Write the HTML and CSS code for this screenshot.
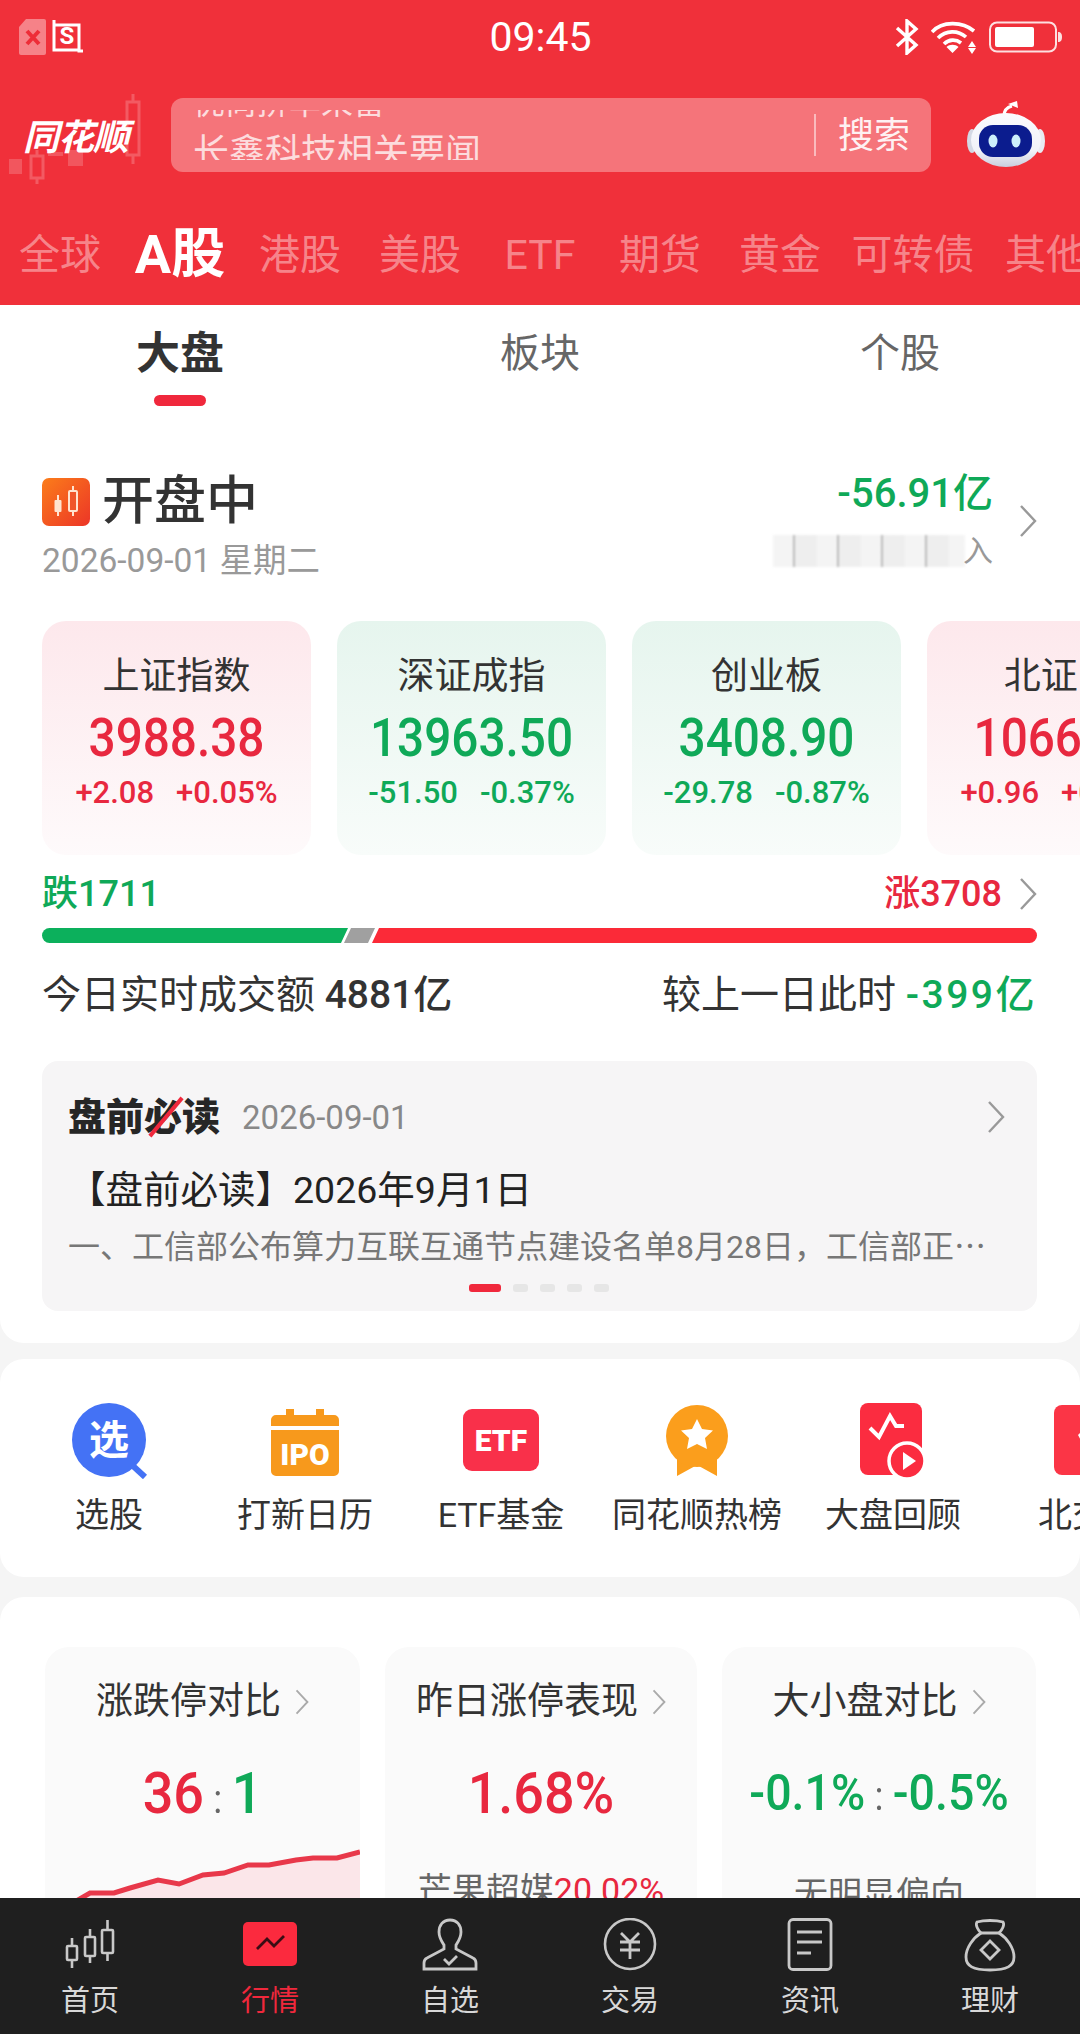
FILE: index.html
```html
<!DOCTYPE html>
<html lang="en">
<head>
  <meta charset="UTF-8" />
  <meta name="viewport" content="width=device-width, initial-scale=1.0"/>
  <title>行情 | 同花顺</title>
  <link rel="stylesheet" href="styles.css">
</head>
<body>
  <svg class="sprite" width="0" height="0">
    <symbol id="chev" viewBox="0 0 18 32"><path d="M2 1l14 15L2 31" fill="none" stroke="currentColor" stroke-width="2.4"/></symbol>
  </svg>

  <div class="page">
    <header class="top">
      <svg class="candles" width="150" height="100" viewBox="0 0 150 100">
        <g fill="#fff" opacity=".18">
          <rect x="2" y="67" width="13" height="15"/>
          <rect x="61" y="58" width="15" height="16"/>
          <rect x="41" y="60" width="15" height="4"/>
        </g>
        <g fill="none" stroke="#fff" stroke-width="3" opacity=".2">
          <path d="M24 64v22h12V64zM30 58v6M30 86v6"/>
          <path d="M120 10v53h12V10zM126 2v8M126 63v9"/>
        </g>
      </svg>

      <div class="status">
        <div class="status-left">
          <svg width="30" height="38" viewBox="0 0 30 38">
            <path d="M8 1h18a2 2 0 0 1 2 2v32a2 2 0 0 1-2 2H3a2 2 0 0 1-2-2V9z" fill="#fff" fill-opacity=".4"/>
            <path d="M9 13l12 13M21 13L9 26" stroke="#ee2d38" stroke-width="4"/>
          </svg>
          <svg width="32" height="36" viewBox="0 0 32 36">
            <path d="M2 1v5h25v26h4M2 1v30h25" fill="none" stroke="#fff" stroke-width="3"/>
            <text x="15" y="25" class="s-glyph">S</text>
          </svg>
        </div>
        <div class="clock">09:45</div>
        <div class="status-right">
          <svg width="24" height="36" viewBox="0 0 24 36">
            <path d="M2 9l19 17-9 8V2l9 8L2 27" fill="none" stroke="#fff" stroke-width="3.4"/>
          </svg>
          <svg width="46" height="34" viewBox="0 0 46 34">
            <g fill="none" stroke="#fff" stroke-width="3.6">
              <path d="M1 12C11 1 31 1 43 11"/>
              <path d="M7 18c8-8 20-8 28-1"/>
              <path d="M13 24c5-5 12-5 17-1"/>
            </g>
            <path d="M21.500 33l-6-6c3-3 9-3 12 0zM41 21l4 6h-8zM37 28h8l-4 6z" fill="#fff"/>
          </svg>
          <svg width="74" height="32" viewBox="0 0 74 32">
            <rect x="1" y="1.500" width="66" height="29" rx="7" fill="none" stroke="#fff" stroke-opacity=".85" stroke-width="2"/>
            <rect x="6" y="6" width="39" height="20" rx="2" fill="#fff"/>
            <path d="M69 11c3 0 4 2 4 5s-1 5-4 5z" fill="#fff" fill-opacity=".85"/>
          </svg>
        </div>
      </div>

      <div class="searchrow">
        <div class="logo">同花顺</div>
        <div class="search">
          <div class="ticker">
            <div class="ticker-prev">优尚拼率采留</div>
            <div class="ticker-now">长鑫科技相关要闻</div>
          </div>
          <div class="search-btn">搜索</div>
        </div>
        <svg class="robot" width="80" height="70" viewBox="0 0 80 70">
          <defs>
            <linearGradient id="head" x1="0" y1="0" x2="0" y2="1">
              <stop offset="0" stop-color="#fbfbfe"/>
              <stop offset=".7" stop-color="#f1f2f8"/>
              <stop offset="1" stop-color="#c9cede"/>
            </linearGradient>
          </defs>
          <path d="M38 16c0-6 4-9 8-10" fill="none" stroke="#fff" stroke-width="3"/>
          <path d="M42 4l9-3 1 7z" fill="#fff"/>
          <ellipse cx="6" cy="41" rx="5" ry="12" fill="#d3d8e4"/>
          <ellipse cx="74" cy="41" rx="5" ry="12" fill="#e8ebf2"/>
          <ellipse cx="40" cy="40" rx="35" ry="27" fill="url(#head)"/>
          <rect x="13" y="25" width="53" height="32" rx="14" fill="#0b1c8e"/>
          <ellipse cx="27" cy="41" rx="4.500" ry="6.500" fill="#cdeffc"/>
          <ellipse cx="50" cy="41" rx="4.500" ry="6.500" fill="#cdeffc"/>
        </svg>
      </div>

      <nav class="markets">
        <span class="market">全球</span>
        <span class="market market-on">A股</span>
        <span class="market">港股</span>
        <span class="market">美股</span>
        <span class="market">ETF</span>
        <span class="market">期货</span>
        <span class="market">黄金</span>
        <span class="market market-wide">可转债</span>
        <span class="market">其他</span>
      </nav>
    </header>

    <section class="panel panel-main">
      <div class="subtabs">
        <div class="subtab subtab-on">大盘<i class="subtab-bar"></i></div>
        <div class="subtab">板块</div>
        <div class="subtab">个股</div>
      </div>

      <div class="session">
        <div>
          <div class="session-title">
            <svg width="48" height="48" viewBox="0 0 48 48">
              <defs>
                <linearGradient id="sess" x1="0" y1="0" x2="1" y2="1">
                  <stop offset="0" stop-color="#fb7d1a"/>
                  <stop offset="1" stop-color="#ec3527"/>
                </linearGradient>
              </defs>
              <rect width="48" height="48" rx="7" fill="url(#sess)"/>
              <path d="M16 17v21M31 8v30" stroke="#ffe3cf" stroke-width="2"/>
              <rect x="12.500" y="22" width="7" height="12" rx="1" fill="#ffe3cf"/>
              <rect x="27" y="13" width="8" height="20" rx="1" fill="#f0562a" stroke="#ffe3cf" stroke-width="2"/>
            </svg>
            <span>开盘中</span>
          </div>
          <div class="session-date">2026-09-01 星期二</div>
        </div>
        <div class="flow">
          <div>
            <div class="flow-num down">-56.91亿</div>
            <div class="flow-label"><i class="smear"></i>入</div>
          </div>
          <svg class="chev"><use href="#chev"/></svg>
        </div>
      </div>

      <div class="indices">
        <div class="index index-up">
          <div class="index-name">上证指数</div>
          <div class="index-num up">3988.38</div>
          <div class="index-sub up"><span>+2.08</span><span>+0.05%</span></div>
        </div>
        <div class="index index-down">
          <div class="index-name">深证成指</div>
          <div class="index-num down">13963.50</div>
          <div class="index-sub down"><span>-51.50</span><span>-0.37%</span></div>
        </div>
        <div class="index index-down">
          <div class="index-name">创业板</div>
          <div class="index-num down">3408.90</div>
          <div class="index-sub down"><span>-29.78</span><span>-0.87%</span></div>
        </div>
        <div class="index index-up">
          <div class="index-name">北证50</div>
          <div class="index-num up">1066.27</div>
          <div class="index-sub up"><span>+0.96</span><span>+0.09%</span></div>
        </div>
      </div>

      <div class="breadth">
        <span class="down">跌1711</span>
        <span class="breadth-right"><span class="up">涨3708</span><svg class="chev"><use href="#chev"/></svg></span>
      </div>
      <div class="bar">
        <i class="bar-down"></i>
        <i class="bar-flat"></i>
        <i class="bar-up"></i>
      </div>

      <div class="turnover">
        <span>今日实时成交额 <b>4881亿</b></span>
        <span>较上一日此时 <b class="down turnover-delta">-399亿</b></span>
      </div>

      <div class="brief">
        <div class="brief-head">
          <span class="brief-logo">盘前<span class="slash">必</span>读</span>
          <span class="brief-date">2026-09-01</span>
          <svg class="chev brief-chev"><use href="#chev"/></svg>
        </div>
        <div class="brief-title">【盘前必读】2026年9月1日</div>
        <div class="brief-body">一、工信部公布算力互联互通节点建设名单8月28日，工信部正<span class="brief-more" lang="zh-CN">…</span></div>
        <div class="dots">
          <i class="dot dot-on"></i><i class="dot"></i><i class="dot"></i><i class="dot"></i><i class="dot"></i>
        </div>
      </div>
    </section>

    <section class="panel panel-short">
      <div class="shortcuts">
        <div class="shortcut">
          <svg width="80" height="76" viewBox="0 0 80 76">
            <circle cx="40" cy="37" r="37" fill="#4472f5"/>
            <path d="M63 62l13 12" stroke="#4472f5" stroke-width="6"/>
            <text x="40" y="51" class="icon-cn">选</text>
          </svg>
          <span>选股</span>
        </div>
        <div class="shortcut">
          <svg width="70" height="70" viewBox="0 0 70 70">
            <path d="M16 3h8v6h-8zM46 3h8v6h-8z" fill="#f7991c"/>
            <path d="M1 14a5 5 0 0 1 5-5h58a5 5 0 0 1 5 5v6H1zM1 24h68v41a5 5 0 0 1-5 5H6a5 5 0 0 1-5-5z" fill="#f7991c"/>
            <text x="35" y="59" class="icon-en">IPO</text>
          </svg>
          <span>打新日历</span>
        </div>
        <div class="shortcut">
          <svg width="76" height="64" viewBox="0 0 76 64">
            <rect width="76" height="62" rx="9" fill="#f9304a"/>
            <text x="38" y="42" class="icon-en">ETF</text>
          </svg>
          <span>ETF基金</span>
        </div>
        <div class="shortcut">
          <svg width="64" height="72" viewBox="0 0 64 72">
            <path d="M12 50h40v21L32 60 12 71z" fill="#fb9e1c"/>
            <circle cx="32" cy="31" r="31" fill="#fb9e1c"/>
            <path d="M32 14l5 10 11 1.500-8 7.500 2 11-10-5-10 5 2-11-8-7.500 11-1.500z" fill="#fff"/>
          </svg>
          <span>同花顺热榜</span>
        </div>
        <div class="shortcut">
          <svg width="66" height="76" viewBox="0 0 66 76">
            <rect width="62" height="72" rx="8" fill="#fb2c40"/>
            <path d="M10 25l9 9 11-21 6 10h8" fill="none" stroke="#fff" stroke-width="4"/>
            <circle cx="47" cy="58" r="18" fill="#fb2c40" stroke="#fff" stroke-width="3.500"/>
            <path d="M43 49l13 9-13 9z" fill="#fff"/>
          </svg>
          <span>大盘回顾</span>
        </div>
        <div class="shortcut">
          <svg width="70" height="72" viewBox="0 0 70 72">
            <rect width="70" height="70" rx="8" fill="#fb3546"/>
            <path d="M24 30l11-11 11 11-11 21z" fill="#fff"/>
          </svg>
          <span>北交所</span>
        </div>
      </div>
    </section>

    <section class="panel panel-stats">
      <div class="stat">
        <div class="stat-title">涨跌停对比<svg class="chev chev-sm"><use href="#chev"/></svg></div>
        <div class="stat-num"><span class="up">36</span><i class="colon">:</i><span class="down">1</span></div>
        <svg class="spark" width="315" height="70" viewBox="0 0 315 70">
          <path d="M10 70L31 55 45 47 69 47 85 42 113 34 134 38 158 29 179 27 203 19 224 19 251 14 268 12 292 12 315 6V70z" fill="#fbe6e9"/>
          <path d="M10 70L31 55 45 47 69 47 85 42 113 34 134 38 158 29 179 27 203 19 224 19 251 14 268 12 292 12 315 6" fill="none" stroke="#e8384a" stroke-width="5"/>
        </svg>
      </div>
      <div class="stat">
        <div class="stat-title">昨日涨停表现<svg class="chev chev-sm"><use href="#chev"/></svg></div>
        <div class="stat-num up">1.68%</div>
        <div class="stat-sub">芒果超媒<span class="up">20.02%</span></div>
      </div>
      <div class="stat">
        <div class="stat-title">大小盘对比<svg class="chev chev-sm"><use href="#chev"/></svg></div>
        <div class="stat-num stat-num-sm down">-0.1%<i class="colon">:</i>-0.5%</div>
        <div class="stat-sub">无明显偏向</div>
      </div>
    </section>

    <nav class="tabbar">
      <div class="tab">
        <svg width="60" height="54" viewBox="0 0 60 54">
          <g fill="none" stroke="#c8c8c8" stroke-width="2.600">
            <path d="M12 20v30M30 11v34M47.500 2v41"/>
            <rect x="7" y="28" width="10" height="14" rx="1" fill="#1f1f1f"/>
            <rect x="25" y="19" width="10" height="19" rx="1" fill="#1f1f1f"/>
            <rect x="42" y="12" width="11" height="23" rx="1" fill="#1f1f1f"/>
          </g>
        </svg>
        首页
      </div>
      <div class="tab tab-on">
        <svg width="60" height="54" viewBox="0 0 60 54">
          <rect x="3" y="4" width="54" height="44" rx="5" fill="#fb2a3e"/>
          <path d="M17 31l10-10 7 7 10-10" fill="none" stroke="#3a0d14" stroke-width="2.800"/>
        </svg>
        行情
      </div>
      <div class="tab">
        <svg width="60" height="54" viewBox="0 0 60 54">
          <path d="M30 2C23 2 19 7 19 14c0 6 3 10 5 13v4L7 40c-2 1-3 3-3 5v6h52v-6c0-2-1-4-3-5l-17-9v-4c2-3 5-7 5-13 0-7-4-12-11-12z" fill="none" stroke="#c8c8c8" stroke-width="2.800"/>
          <path d="M24 41l5 5 8-8" fill="none" stroke="#c8c8c8" stroke-width="2.800"/>
        </svg>
        自选
      </div>
      <div class="tab">
        <svg width="60" height="54" viewBox="0 0 60 54">
          <circle cx="30" cy="26" r="25" fill="none" stroke="#c8c8c8" stroke-width="2.600"/>
          <path d="M21 15l9 9 9-9M20 24h20M20 32h20M30 24v17" fill="none" stroke="#c8c8c8" stroke-width="2.800"/>
        </svg>
        交易
      </div>
      <div class="tab">
        <svg width="60" height="54" viewBox="0 0 60 54">
          <rect x="9" y="1.500" width="42" height="50" rx="4" fill="none" stroke="#c8c8c8" stroke-width="2.800"/>
          <path d="M17 14h25M17 24h25M17 35h14" stroke="#c8c8c8" stroke-width="2.800"/>
        </svg>
        资讯
      </div>
      <div class="tab">
        <svg width="60" height="54" viewBox="0 0 60 54">
          <path d="M17 4c7-2 19-2 26 0 2 3-1 8-4 11 8 5 15 15 15 24 0 9-7 13-24 13S6 48 6 39c0-9 7-19 15-24-3-3-6-8-4-11z" fill="none" stroke="#c8c8c8" stroke-width="2.800"/>
          <path d="M21 15h18M30 23l9 9-9 9-9-9z" fill="none" stroke="#c8c8c8" stroke-width="2.800"/>
        </svg>
        理财
      </div>
    </nav>
  </div>
</body>
</html>
```

FILE: styles.css
```css
:root {
  --red: #f0303a;
  --up: #e8283f;
  --down: #0fa958;
  --ink: #333;
  --muted: #999;
}
* {
  margin: 0;
  padding: 0;
  box-sizing: border-box;
}
body {
  font-family: Roboto, "Noto Sans CJK SC", sans-serif;
  background: #f5f5f5;
  color: var(--ink);
}
.sprite {
  display: block;
  height: 0;
}
.page {
  position: relative;
  width: 1080px;
  height: 2034px;
  overflow: hidden;
}
.up { color: var(--up); }
.down { color: var(--down); }
.chev {
  display: block;
  flex: none;
  width: 18px;
  height: 32px;
  color: var(--muted);
}

/* red header */
.top {
  position: relative;
  height: 305px;
  background: var(--red);
  color: #fff;
}
.candles {
  position: absolute;
  left: 7px;
  top: 92px;
}
.status {
  position: relative;
  display: flex;
  justify-content: space-between;
  align-items: center;
  height: 74px;
  padding: 0 17px 0 18px;
}
.status-left, .status-right {
  display: flex;
  align-items: center;
  width: 200px;
}
.status-left { gap: 4px; }
.status-right {
  justify-content: flex-end;
  gap: 12px;
}
.s-glyph {
  font-size: 24px;
  font-weight: 700;
  fill: #fff;
  text-anchor: middle;
}
.clock {
  font-size: 41px;
  line-height: 74px;
}
.searchrow {
  position: relative;
  display: flex;
  align-items: center;
  height: 74px;
  margin-top: 24px;
}
.logo {
  width: 171px;
  margin-top: -3px;
  padding-left: 23px;
  font-size: 36px;
  font-weight: 700;
  font-style: italic;
  letter-spacing: -1px;
}
.search {
  display: flex;
  align-items: center;
  width: 760px;
  height: 74px;
  padding: 0 21px 0 22px;
  border-radius: 12px;
  background: rgba(255,255,255,0.33);
}
.ticker {
  flex: 1;
  height: 50px;
  overflow: hidden;
  color: rgba(255,255,255,0.75);
}
.ticker-prev {
  height: 41px;
  margin-top: -18px;
  font-size: 32px;
  line-height: 22px;
}
.ticker-now {
  height: 40px;
  font-size: 36px;
  line-height: 40px;
}
.search-btn {
  padding: 2px 0 0 22px;
  border-left: 2px solid rgba(255,255,255,0.5);
  font-size: 36px;
  line-height: 40px;
  color: rgba(255,255,255,0.92);
}
.robot {
  margin-left: 35px;
}
.markets {
  display: flex;
  align-items: center;
  height: 60px;
  margin-top: 53px;
  white-space: nowrap;
}
.market {
  flex: none;
  width: 120px;
  text-align: center;
  font-size: 41px;
  line-height: 60px;
  color: rgba(255,255,255,0.42);
}
.market-on {
  font-size: 54px;
  font-weight: 700;
  color: #fff;
}
.market-wide { width: 146px; }

/* cards */
.panel {
  background: #fff;
  border-radius: 24px;
}
.panel-main {
  padding-bottom: 32px;
  border-radius: 0 0 24px 24px;
}
.subtabs {
  display: flex;
  height: 101px;
}
.subtab {
  flex: 1;
  display: flex;
  flex-direction: column;
  align-items: center;
  padding-top: 24px;
  font-size: 40px;
  line-height: 50px;
  color: #666;
}
.subtab-on {
  font-size: 44px;
  font-weight: 700;
  color: var(--ink);
}
.subtab-bar {
  width: 52px;
  height: 11px;
  margin-top: 16px;
  border-radius: 6px;
  background: #f0283c;
}
.session {
  display: flex;
  justify-content: space-between;
  margin-top: 66px;
  padding: 0 43px 0 42px;
}
.session-title {
  display: flex;
  align-items: center;
  gap: 12px;
  font-size: 52px;
  font-weight: 500;
  line-height: 60px;
}
.session-date {
  margin-top: 9px;
  font-size: 33.500px;
  line-height: 40px;
  color: var(--muted);
}
.flow {
  display: flex;
  align-items: center;
  gap: 26px;
  margin-top: -11px;
}
.flow-num {
  font-size: 40px;
  font-weight: 500;
  line-height: 44px;
  text-align: right;
}
.flow-label {
  display: flex;
  justify-content: flex-end;
  align-items: center;
  margin-top: 15px;
  font-size: 30px;
  line-height: 40px;
  color: #999;
}
.smear {
  width: 192px;
  height: 32px;
  margin-right: -2px;
  filter: blur(1px);
  background: repeating-linear-gradient(90deg, rgba(120,120,120,0.08) 0 20px, rgba(120,120,120,0.5) 20px 22px, rgba(120,120,120,0.12) 22px 44px);
}
.indices {
  display: flex;
  gap: 26px;
  margin-top: 40px;
  padding-left: 42px;
  overflow: hidden;
}
.index {
  flex: none;
  width: 269px;
  height: 234px;
  padding-top: 34px;
  border-radius: 24px;
  text-align: center;
}
.index-up { background: linear-gradient(#fde8ec, #fefafb); }
.index-down { background: linear-gradient(#e6f5ee, #f8fcfa); }
.index-name {
  font-size: 37px;
  line-height: 44px;
}
.index-num {
  margin-top: 9px;
  font-size: 53px;
  font-weight: 500;
  line-height: 60px;
  transform: scaleX(0.9);
}
.index-sub {
  display: flex;
  justify-content: center;
  gap: 22px;
  margin-top: 7px;
  font-size: 31px;
  font-weight: 500;
  line-height: 36px;
  white-space: nowrap;
}
.breadth {
  display: flex;
  justify-content: space-between;
  margin-top: 17px;
  padding: 0 43px 0 42px;
  font-size: 36px;
  font-weight: 500;
  line-height: 44px;
}
.breadth-right {
  display: flex;
  align-items: center;
  gap: 17px;
}
.bar {
  display: flex;
  height: 15px;
  margin: 12px 43px 0 42px;
  border-radius: 8px;
  overflow: hidden;
}
.bar-down {
  width: 306px;
  background: #0cb05c;
  clip-path: polygon(0 0, 100% 0, 299px 100%, 0 100%);
}
.bar-flat {
  width: 31px;
  margin-left: -4px;
  background: #a0a0a0;
  clip-path: polygon(7px 0, 100% 0, 24px 100%, 0 100%);
}
.bar-up {
  flex: 1;
  margin-left: -3px;
  background: #fb2a38;
  clip-path: polygon(7px 0, 100% 0, 100% 100%, 0 100%);
}
.turnover {
  display: flex;
  justify-content: space-between;
  margin-top: 30px;
  padding: 0 43px 0 42px;
  font-size: 39px;
  line-height: 44px;
}
.turnover b { font-weight: 500; }
.turnover-delta { letter-spacing: 2.500px; }
.brief {
  height: 250px;
  margin: 44px 43px 0 42px;
  padding: 34px 26px 0;
  border-radius: 16px;
  background: #f6f5f6;
}
.brief-head {
  display: flex;
  align-items: center;
  height: 44px;
}
.brief-logo {
  font-size: 38px;
  font-weight: 900;
  line-height: 44px;
  color: #262626;
}
.slash { position: relative; }
.slash::after {
  content: "";
  position: absolute;
  left: -3px;
  top: 20px;
  width: 50px;
  height: 4px;
  background: #f0283c;
  transform: rotate(-50deg);
}
.brief-date {
  margin-left: 22px;
  font-size: 33px;
  color: #888;
}
.brief-chev {
  margin-left: auto;
  margin-right: 6px;
}
.brief-title {
  margin-top: 29px;
  font-size: 37.500px;
  line-height: 44px;
  color: #222;
}
.brief-body {
  margin-top: 12px;
  font-size: 32px;
  line-height: 40px;
  color: #777;
  white-space: nowrap;
}
.brief-more {
  font-family: "Noto Sans CJK SC", sans-serif;
}
.dots {
  display: flex;
  justify-content: center;
  gap: 12px;
  margin: 17px 0 0 -2px;
}
.dot {
  width: 15px;
  height: 8px;
  border-radius: 3px;
  background: #e6e6e6;
}
.dot-on {
  width: 32px;
  background: #f0283c;
}
.panel-short {
  margin-top: 16px;
  height: 218px;
  overflow: hidden;
}
.shortcuts {
  display: flex;
  padding: 44px 0 0 11px;
}
.shortcut {
  flex: none;
  display: flex;
  flex-direction: column;
  align-items: center;
  width: 196px;
  font-size: 34px;
  line-height: 40px;
  white-space: nowrap;
}
.shortcut svg {
  display: block;
  height: 76px;
  margin-bottom: 16px;
}
.icon-cn {
  font-size: 40px;
  font-weight: 700;
  fill: #fff;
  text-anchor: middle;
}
.icon-en {
  font-size: 30px;
  font-weight: 900;
  fill: #fff;
  text-anchor: middle;
}
.panel-stats {
  display: grid;
  grid-template-columns: 315px 312px 314px;
  gap: 25px;
  height: 437px;
  margin-top: 20px;
  padding: 50px 45px 0;
  border-radius: 24px 24px 0 0;
}
.stat {
  height: 300px;
  padding-top: 33px;
  border-radius: 24px;
  background: #fafafa;
  text-align: center;
  overflow: hidden;
}
.stat-title {
  display: flex;
  justify-content: center;
  align-items: center;
  gap: 14px;
  font-size: 37px;
  line-height: 44px;
}
.chev-sm {
  width: 14px;
  height: 28px;
  color: #aaa;
}
.stat-num {
  margin-top: 39px;
  font-size: 58px;
  font-weight: 500;
  line-height: 60px;
  transform: scaleX(0.93);
  white-space: nowrap;
}
.stat-num-sm { font-size: 50px; }
.colon {
  margin: 0 10px;
  font-style: normal;
  font-size: 40px;
  font-weight: 400;
  color: #666;
}
.spark {
  display: block;
  margin-top: 16px;
}
.stat-sub {
  margin-top: 45px;
  font-size: 34px;
  line-height: 44px;
  color: #666;
  white-space: nowrap;
}

/* bottom bar sits over the scrolled content */
.tabbar {
  position: absolute;
  left: 0;
  right: 0;
  bottom: 0;
  display: flex;
  height: 136px;
  padding-top: 20px;
  background: #1f1f1f;
}
.tab {
  flex: 1;
  display: flex;
  flex-direction: column;
  align-items: center;
  font-size: 29px;
  line-height: 34px;
  color: #d8d8d8;
}
.tab svg {
  display: block;
  margin-bottom: 12px;
}
.tab-on { color: #f0283c; }
```
